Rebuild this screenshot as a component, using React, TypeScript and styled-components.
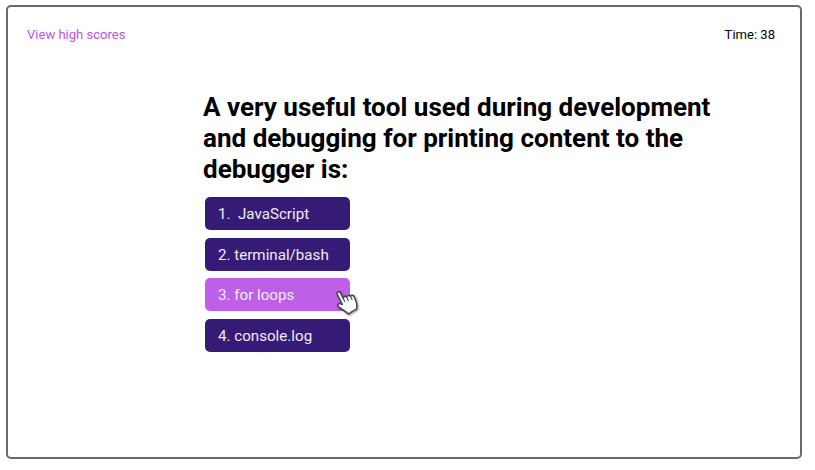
import React from "react";
import styled, { createGlobalStyle } from "styled-components";

const GlobalStyle = createGlobalStyle`
  * { box-sizing: border-box; }
  body { margin: 0; background: #fff; font-family: Roboto, sans-serif; color: #000; overflow: hidden; }
`;

const Frame = styled.main`
  width: 796px;
  height: 454px;
  margin: 5px 0 0 6px;
  border: 2px solid #6a6a6a;
  border-radius: 5px;
`;

const TopBar = styled.header`
  display: flex;
  justify-content: space-between;
  padding: 19px 25px 0 19px;
  font-size: 13.05px;
  line-height: 17px;
`;

const ScoresLink = styled.a`
  color: #b955e8;
`;

const Quiz = styled.section`
  width: 540px;
  margin: 49px 0 0 195px;
`;

const Question = styled.h1`
  margin: 0;
  font-size: 26.04px;
  line-height: 31px;
  font-weight: 700;
  white-space: nowrap;
`;

const Answers = styled.div`
  display: flex;
  flex-direction: column;
  gap: 7.6px;
  padding: 12px 0 0 2.3px;
`;

const Answer = styled.button<{ $active?: boolean }>`
  position: relative;
  width: 145px;
  height: 33px;
  padding: 0 12.7px;
  border: 0;
  border-radius: 5px;
  background: ${(p) => (p.$active ? "#be5fe8" : "#351b75")};
  color: #f0ecf6;
  font: 400 15.15px/34px Roboto, sans-serif;
  text-align: left;
  white-space: pre;
`;

const Hand = styled.svg`
  position: absolute;
  left: 126.7px;
  top: 8px;
  z-index: 1;
  filter: drop-shadow(1px 1px 1px rgba(0, 0, 0, 0.4));
`;

const answers = ["1.  JavaScript", "2. terminal/bash", "3. for loops", "4. console.log"];

function HandCursor() {
  return (
    <Hand width="32" height="33" viewBox="0 0 32 32" preserveAspectRatio="none" fill="none" strokeLinejoin="round" strokeLinecap="round">
      <path
        d="M5.2 7.8C4.6 6 7.5 4.8 8.5 6.6L11.2 12.1C11.1 10.2 13.6 9.4 14.7 10.7C15.3 8.7 17.6 8.7 18.5 10C19.6 8.5 21.5 8.9 22.2 10.5L24.1 15.1C25.3 18 24.9 20.2 24.5 22.4C21.4 23.9 19 25.3 16.4 27.2C13.6 24.3 9.5 22.8 6.6 20.2C4.9 18.5 6.4 16.4 8.7 17.2L10.3 17.9Z"
        fill="#fff"
        stroke="#484848"
        strokeWidth="1.5"
      />
      <path d="M11.2 12.1L12.7 15M14.7 10.7L16.4 14.2M18.5 10L20 13.2" stroke="#484848" strokeWidth="1.1" />
    </Hand>
  );
}

export default function App() {
  return (
    <>
      <GlobalStyle />
      <Frame>
        <TopBar>
          <ScoresLink>View high scores</ScoresLink>
          <span>Time: 38</span>
        </TopBar>
        <Quiz>
          <Question>
            A very useful tool used during development<br />
            and debugging for printing content to the<br />
            debugger is:
          </Question>
          <Answers>
            {answers.map((text, i) => (
              <Answer key={text} $active={i === 2}>
                {text}
                {i === 2 && <HandCursor />}
              </Answer>
            ))}
          </Answers>
        </Quiz>
      </Frame>
    </>
  );
}
